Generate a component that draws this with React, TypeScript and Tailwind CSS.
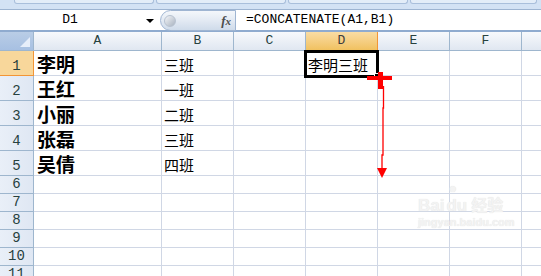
import React from "react";

const cols = ["A", "B", "C", "D", "E", "F", ""];
const colW = [128, 72, 72, 72, 72, 72, 40];
const names = ["李明", "王红", "小丽", "张磊", "吴倩"];
const classes = ["三班", "一班", "二班", "三班", "四班"];

const mono = { fontFamily: '"Liberation Mono", "DejaVu Sans Mono", monospace' };
const cjk = { fontFamily: '"Noto Sans CJK SC", "Noto Sans", sans-serif' };

export default function App() {
  const rows = Array.from({ length: 11 }, (_, i) => i + 1);
  return (
    <div className="w-[541px] h-[276px] overflow-hidden bg-white relative select-none">
      {/* ribbon bottom strip */}
      <div className="h-[10px] bg-[#d3e2f4] border-b border-[#9db4d1] flex items-start gap-[2px] px-[4px]">
        <div className="h-[4px] w-[140px] ml-[10px] rounded-b-[3px] border-x border-b border-[#a9bfdb] bg-[#e3edf8]" />
        <div className="h-[4px] w-[130px] rounded-b-[3px] border-x border-b border-[#a9bfdb] bg-[#e3edf8]" />
        <div className="h-[4px] w-[120px] rounded-b-[3px] border-x border-b border-[#a9bfdb] bg-[#e3edf8]" />
        <div className="h-[4px] flex-1 rounded-b-[3px] border-x border-b border-[#a9bfdb] bg-[#e3edf8]" />
      </div>
      {/* formula bar */}
      <div className="h-[22px] flex border-b-2 border-[#8fabcf] bg-white">
        <div className="w-[160px] relative flex items-center justify-center text-[13px] text-black" style={mono}>
          <span className="-ml-[20px]">D1</span>
          <div className="absolute left-[146px] top-[9px] w-0 h-0 border-l-[4px] border-r-[4px] border-t-[4px] border-l-transparent border-r-transparent border-t-black" />
        </div>
        <div className="w-[76px] h-[21px] rounded-l-[11px] border border-[#9fb5d2] bg-gradient-to-b from-[#f4f7fb] via-[#e3eaf3] to-[#cfdbea] flex items-center justify-between pl-[3px] pr-[4px]">
          <div className="w-[12px] h-[12px] rounded-full bg-gradient-to-br from-[#f4f6f9] to-[#a9b3c0] border border-[#b7c2d0]" />
          <span className="text-[13px] italic font-bold text-[#4c4c4c]" style={{ fontFamily: '"Liberation Serif", serif' }}>
            f<span className="text-[11px]">x</span>
          </span>
        </div>
        <div className="flex-1 flex items-center pl-[10px] text-[13px] text-black" style={mono}>
          =CONCATENATE(A1,B1)
        </div>
      </div>
      {/* grid */}
      <div className="relative">
        <div
          className="grid"
          style={{ gridTemplateColumns: `34px ${colW.map((w) => w + "px").join(" ")}` }}
        >
          {/* header row */}
          <div className="h-[19px] bg-gradient-to-b from-[#b9cde6] to-[#a7c0e2] border-r border-b border-[#9eb6ce] relative">
            <div className="absolute right-[3px] bottom-[3px] w-0 h-0 border-b-[10px] border-l-[10px] border-b-[#e6eefa] border-l-transparent" />
          </div>
          {cols.map((c, i) => (
            <div
              key={c + i}
              className={
                "h-[19px] border-r border-b flex items-center justify-center text-[13px] " +
                (c === "D"
                  ? "bg-gradient-to-b from-[#f9dca3] to-[#f1c15f] border-[#f29536] text-[#3c3c3c]"
                  : "bg-gradient-to-b from-[#f7f9fc] to-[#e0e7f1] border-[#9eb6ce] text-[#27413e]")
              }
              style={mono}
            >
              {c}
            </div>
          ))}
          {rows.map((r) => {
            const h = r <= 5 ? "h-[25px]" : "h-[18px]";
            return (
              <React.Fragment key={r}>
                <div
                  className={
                    h +
                    " border-r border-b flex items-end justify-center pb-[1px] text-[14px] leading-[16px] " +
                    (r === 1
                      ? "bg-[#f8d79b] border-[#f29536] text-[#27413e]"
                      : "bg-gradient-to-r from-[#e9eff8] to-[#dfe7f3] border-[#9eb6ce] text-[#27413e]")
                  }
                  style={mono}
                >
                  {r}
                </div>
                {cols.map((c, i) => (
                  <div
                    key={c + i}
                    className={h + " border-r border-b border-[#d0d7e5] flex items-end overflow-hidden whitespace-nowrap"}
                  >
                    {r <= 5 && c === "A" && (
                      <span className="pl-[3px] text-[19px] font-bold leading-[22px] text-black" style={cjk}>
                        {names[r - 1]}
                      </span>
                    )}
                    {r <= 5 && c === "B" && (
                      <span className="pl-[2px] text-[15px] leading-[20px] text-black" style={cjk}>
                        {classes[r - 1]}
                      </span>
                    )}
                    {r === 1 && c === "D" && (
                      <span className="pl-[2px] text-[15px] leading-[20px] text-black" style={cjk}>
                        李明三班
                      </span>
                    )}
                  </div>
                ))}
              </React.Fragment>
            );
          })}
        </div>
        {/* selection box */}
        <div className="absolute left-[304px] top-[18px] w-[75px] h-[28px] border-[3px] border-black" />
        <div className="absolute left-[374px] top-[41px] w-[7px] h-[7px] bg-black border border-white" />
        {/* red annotation */}
        <svg className="absolute left-0 top-0" width="541" height="245" viewBox="0 32 541 245">
          <rect x="367" y="76" width="25" height="4" fill="#ff0000" />
          <rect x="378" y="72" width="5" height="17" fill="#ff0000" />
          <polyline points="383.5,86 383.5,108 383,108 383,155 382,155 382,170" fill="none" stroke="#ff0000" strokeWidth="1.3" />
          <polygon points="377,168 387,168 382,178" fill="#ff0000" />
        </svg>
        {/* watermark */}
        <div className="absolute left-[418px] top-[165px] text-[#f3f3f3] pointer-events-none" style={{ fontFamily: '"Liberation Sans", "Noto Sans CJK SC", sans-serif', textShadow: "0 0 1px #dddddd" }}>
          <div className="flex items-end gap-[2px] text-[17px] font-bold leading-none">
            <span>Bai</span>
            <span className="relative">
              du
              <span className="absolute -top-[16px] left-[2px] text-[14px]">●</span>
            </span>
            <span className="text-[16px] ml-[2px]">经验</span>
          </div>
          <div className="text-[11px] font-bold mt-[3px] leading-none">jingyan.baidu.com</div>
        </div>
      </div>
    </div>
  );
}
